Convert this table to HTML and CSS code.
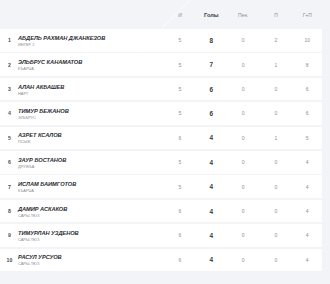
FILE: index.html
```html
<!DOCTYPE html>
<html lang="ru">
<head>
<meta charset="utf-8">
<link rel="stylesheet" href="styles.css">
</head>
<body>
<div class="page">
  <div class="head">
    <span></span><span></span>
    <span class="h">И</span>
    <span class="h goals">Голы</span>
    <span class="h">Пен.</span>
    <span class="h">П</span>
    <span class="h">Г+П</span>
  </div>
  <div class="list">
    <div class="row"><span class="rank">1</span><div class="who"><div class="name">АБДЕЛЬ РАХМАН ДЖАНКЕЗОВ</div><div class="team">ИНТЕР 2</div></div><span class="v">5</span><span class="v g">8</span><span class="v">0</span><span class="v">2</span><span class="v">10</span></div>
    <div class="row"><span class="rank">2</span><div class="who"><div class="name">ЭЛЬБРУС КАНАМАТОВ</div><div class="team">КЪАРЧА</div></div><span class="v">5</span><span class="v g">7</span><span class="v">0</span><span class="v">1</span><span class="v">8</span></div>
    <div class="row"><span class="rank">3</span><div class="who"><div class="name">АЛАН АКБАШЕВ</div><div class="team">НАРТ</div></div><span class="v">5</span><span class="v g">6</span><span class="v">0</span><span class="v">0</span><span class="v">6</span></div>
    <div class="row"><span class="rank">4</span><div class="who"><div class="name">ТИМУР БЕЖАНОВ</div><div class="team">ЭЛЬБРУС</div></div><span class="v">5</span><span class="v g">6</span><span class="v">0</span><span class="v">0</span><span class="v">6</span></div>
    <div class="row"><span class="rank">5</span><div class="who"><div class="name">АЗРЕТ КСАЛОВ</div><div class="team">ПСЫЖ</div></div><span class="v">6</span><span class="v g">4</span><span class="v">0</span><span class="v">1</span><span class="v">5</span></div>
    <div class="row"><span class="rank">6</span><div class="who"><div class="name">ЗАУР БОСТАНОВ</div><div class="team">ДРУЖБА</div></div><span class="v">5</span><span class="v g">4</span><span class="v">0</span><span class="v">0</span><span class="v">4</span></div>
    <div class="row"><span class="rank">7</span><div class="who"><div class="name">ИСЛАМ БАИМГОТОВ</div><div class="team">КЪАРЧА</div></div><span class="v">5</span><span class="v g">4</span><span class="v">0</span><span class="v">0</span><span class="v">4</span></div>
    <div class="row"><span class="rank">8</span><div class="who"><div class="name">ДАМИР АСКАКОВ</div><div class="team">САРЫ-ТЮЗ</div></div><span class="v">6</span><span class="v g">4</span><span class="v">0</span><span class="v">0</span><span class="v">4</span></div>
    <div class="row"><span class="rank">9</span><div class="who"><div class="name">ТИМУРЛАН УЗДЕНОВ</div><div class="team">САРЫ-ТЮЗ</div></div><span class="v">6</span><span class="v g">4</span><span class="v">0</span><span class="v">0</span><span class="v">4</span></div>
    <div class="row"><span class="rank">10</span><div class="who"><div class="name">РАСУЛ УРСУОВ</div><div class="team">САРЫ-ТЮЗ</div></div><span class="v">6</span><span class="v g">4</span><span class="v">0</span><span class="v">0</span><span class="v">4</span></div>
  </div>
</div>
</body>
</html>
```
FILE: styles.css
```css
html, body {
  margin: 0;
  padding: 0;
  background: #f3f4f8;
}
body {
  width: 330px;
  height: 284px;
  overflow: hidden;
  font-family: "Liberation Sans", Arial, sans-serif;
}
.page {
  width: 322px;
  background:
    linear-gradient(135deg, transparent 49.7%, rgba(255,255,255,0.6) 50%, transparent 50.3%) 120px 0 / 80px 60px no-repeat;
}
.head, .row {
  display: grid;
  grid-template-columns: 18px 1fr 31px 31.5px 32.5px 33px 29.5px;
  align-items: center;
}
.head {
  height: 27px;
  padding-top: 1px;
}
.h {
  text-align: center;
  font-size: 5px;
  color: #8e8e96;
}
.h.goals {
  font-size: 5.6px;
  font-weight: bold;
  color: #3a3a40;
}
.list {
  display: flex;
  flex-direction: column;
  gap: 1.8px;
  margin-top: 1px;
}
.row {
  height: 22.6px;
  background: #ffffff;
}
.rank {
  text-align: center;
  padding-left: 1px;
  font-size: 5.2px;
  font-weight: bold;
  color: #4a4a52;
}
.who {
  display: flex;
  flex-direction: column;
  gap: 2px;
  padding-top: 1px;
}
.name {
  font-size: 5.7px;
  font-weight: bold;
  font-style: italic;
  color: #2b2b33;
  letter-spacing: -0.05px;
  line-height: 6px;
}
.team {
  font-size: 3.9px;
  color: #8a8a92;
  line-height: 4px;
}
.v {
  text-align: center;
  font-size: 5px;
  color: #8e8e96;
}
.v.g {
  font-size: 6.4px;
  font-weight: bold;
  color: #3a3a40;
}
```
